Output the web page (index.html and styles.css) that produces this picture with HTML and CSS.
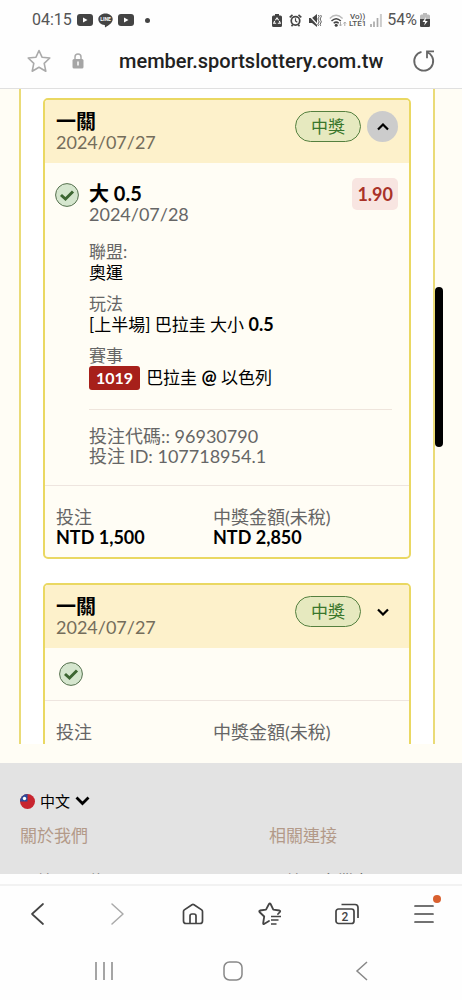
FILE: index.html
```html
<!DOCTYPE html>
<html lang="zh-Hant">
<head>
<meta charset="utf-8">
<meta name="viewport" content="width=device-width, initial-scale=1">
<title>member.sportslottery.com.tw</title>
<link rel="stylesheet" href="styles.css">
</head>
<body>
<div class="status-bar">
  <div class="status-group">
    <span class="clock">04:15</span>
    <svg width="16" height="12" viewBox="0 0 16 12"><rect width="16" height="12" rx="3" fill="#444"/><path d="M6 3.5v5L10.5 6z" fill="#fff"/></svg>
    <svg width="15" height="15" viewBox="0 0 15 15"><path d="M7.500 .5C3.500.5.3 3 .3 6.300c0 3 2.700 5.400 6.200 5.800.6.100.5.700.4 1.400-.1.900.5.700 1.100.4 2.200-1.200 6.700-4 6.700-7.600C14.700 3 11.500.5 7.500.5z" fill="#444"/><text x="7.500" y="8" text-anchor="middle" class="line-text">LINE</text></svg>
    <svg width="16" height="12" viewBox="0 0 16 12"><rect width="16" height="12" rx="3" fill="#444"/><path d="M6 3.500v5L10.500 6z" fill="#fff"/></svg>
    <span class="more-dot"></span>
  </div>
  <div class="status-group status-right">
    <svg width="10" height="13" viewBox="0 0 10 13"><path d="M3 0h4v1.500h1.500Q10 1.500 10 3v8.500q0 1.500-1.500 1.500h-7Q0 13 0 11.500V3q0-1.500 1.500-1.500H3z" fill="#444"/><path d="M3.400 6.200 5 4l1.600 2.200M7.300 7l1 2.200H5.800M2.700 7l-1 2.200h2.500" fill="none" stroke="#fff" stroke-width="1.100"/></svg>
    <svg width="13" height="13" viewBox="0 0 13 13"><path d="M.7 3.300 3.500.8M12.300 3.300 9.500.8M2.500 12.300l1.200-1.500M10.500 12.300l-1.200-1.500" stroke="#444" stroke-width="1.600"/><circle cx="6.500" cy="6.800" r="5.100" fill="#444"/><circle cx="6.500" cy="6.800" r="3.400" fill="#fff"/><path d="M6.500 4.300V7l1.800 1.200" stroke="#444" fill="none" stroke-width="1.200"/></svg>
    <svg width="13" height="13" viewBox="0 0 13 13"><path d="M0 4h3l5-4v13L3 9H0z" fill="#444"/><path d="M0 1.500l9.500 10" stroke="#fff" stroke-width="1.200"/><path d="M9.500 1q1.200 1.500 0 2.700t0 2.700 0 2.700 0 2.700M11.700 1q1.200 1.500 0 2.700t0 2.700 0 2.700 0 2.700" fill="none" stroke="#555"/></svg>
    <svg class="wifi" width="18" height="13" viewBox="0 0 18 13"><path d="M.8 4.500Q7 -2 13.600 4.500" stroke="#bbb" stroke-width="1.400" fill="none"/><path d="M2.500 7Q7.200 2.500 11.800 7M4.700 9.300q2.500-2.300 5 0" stroke="#444" stroke-width="1.500" fill="none"/><circle cx="7.200" cy="11.300" r="1.500" fill="#444"/><path d="M11.500 8v4m-1.300-1.500L11.500 12l1.300-1.500M15.800 12V8m-1.300 1.500L15.800 8l1.300 1.500" fill="none" stroke="#aaa"/></svg>
    <span class="volte"><span>Vo))</span><span>LTE1</span></span>
    <svg width="12" height="13" viewBox="0 0 12 13"><path d="M1 13v-3M4 13V7.500M7.500 13V4" stroke="#aaa" stroke-width="1.700"/><path d="M10.900 13V0" stroke="#ccc" stroke-width="2"/></svg>
    <span class="percent">54%</span>
    <svg width="10" height="14" viewBox="0 0 10 14"><path d="M3 0h4v1.500h1.500Q10 1.500 10 3v9.500Q10 14 8.500 14h-7Q0 14 0 12.500V3q0-1.500 1.500-1.500H3z" fill="#bbb"/><path d="M0 6h10v6.500Q10 14 8.500 14h-7Q0 14 0 12.500z" fill="#444"/><path d="M6 4 2.500 9H5l-.8 3.500L7.800 8H5.300z" fill="#fff"/></svg>
  </div>
</div>
<header class="address-bar">
  <button class="icon-button" aria-label="書籤"><svg width="26" height="26" viewBox="0 0 26 26"><path d="M13 2.500 16 9.200 23.800 10 18.200 15.300 19.800 23.200 13 19.200 6.200 23.200 7.800 15.300 2.200 10 10 9.200z" fill="none" stroke="#aaa" stroke-width="1.600" stroke-linejoin="round"/></svg></button>
  <svg class="lock" width="12" height="16" viewBox="0 0 12 16"><path d="M3 7V4q0-3 3-3t3 3v3" fill="none" stroke="#aaa" stroke-width="1.500"/><rect x=".5" y="6" width="11" height="9.500" rx="1.500" fill="#a5a5a5"/><path d="M6 8.500v4" stroke="#fff" stroke-width="1.500"/></svg>
  <span class="address">member.sportslottery.com.tw</span>
  <button class="icon-button reload" aria-label="重新整理"><svg width="24" height="24" viewBox="0 0 24 24"><path d="M9.500 2.900A9.500 9.500 0 1 0 20 7.500Q18.500 4.500 15 3.200" fill="none" stroke="#666" stroke-width="1.800"/><path d="M22 2.300h-7v7" fill="none" stroke="#666" stroke-width="1.800"/></svg></button>
</header>
<main class="viewport">
  <div class="results">
    <div class="panel">
      <article class="card">
        <div class="card-head">
          <div><h2>一關</h2><time>2024/07/27</time></div>
          <span class="pill">中獎</span>
          <button class="toggle open" aria-label="收合"><svg width="12" height="8" viewBox="0 0 12 8"><path d="M1 6.500 6 1.500l5 5" fill="none" stroke="#000" stroke-width="2.200"/></svg></button>
        </div>
        <div class="pick">
          <svg class="check" width="24" height="24" viewBox="0 0 24 24"><circle cx="12" cy="12" r="11.400" fill="#d5e6ce" stroke="#55704e"/><path d="M6 12 10.500 16 18 8.500" fill="none" stroke="#3d6632" stroke-width="3"/></svg>
          <div class="pick-main">
            <div class="pick-title">
              <div><h3>大 0.5</h3><time>2024/07/28</time></div>
              <span class="odds">1.90</span>
            </div>
            <dl class="facts">
              <div><dt>聯盟:</dt><dd>奧運</dd></div>
              <div><dt>玩法</dt><dd>[上半場] 巴拉圭 大小 <b>0.5</b></dd></div>
              <div><dt>賽事</dt><dd><span class="match-no">1019</span>巴拉圭 <b>@</b> 以色列</dd></div>
            </dl>
            <div class="codes"><p>投注代碼:: 96930790</p><p>投注 ID: 107718954.1</p></div>
          </div>
        </div>
        <dl class="totals">
          <div><dt>投注</dt><dd>NTD 1,500</dd></div>
          <div><dt>中獎金額(未稅)</dt><dd>NTD 2,850</dd></div>
        </dl>
      </article>
      <article class="card">
        <div class="card-head">
          <div><h2>一關</h2><time>2024/07/27</time></div>
          <span class="pill">中獎</span>
          <button class="toggle" aria-label="展開"><svg width="12" height="8" viewBox="0 0 12 8"><path d="M1 1.500 6 6.500l5-5" fill="none" stroke="#000" stroke-width="2.200"/></svg></button>
        </div>
        <div class="summary">
          <svg class="check" width="24" height="24" viewBox="0 0 24 24"><circle cx="12" cy="12" r="11.400" fill="#d5e6ce" stroke="#55704e"/><path d="M6 12 10.500 16 18 8.500" fill="none" stroke="#3d6632" stroke-width="3"/></svg>
        </div>
        <dl class="totals">
          <div><dt>投注</dt></div>
          <div><dt>中獎金額(未稅)</dt></div>
        </dl>
      </article>
    </div>
  </div>
  <footer class="site-footer">
    <button class="language">
      <svg width="15" height="15" viewBox="0 0 15 15"><circle cx="7.500" cy="7.500" r="7.500" fill="#c8252f"/><path d="M0 7.500A7.500 7.500 0 0 1 7.500 0v7.500z" fill="#2c4c9c"/><circle cx="4.500" cy="4.500" r="1.700" fill="#fff"/></svg>
      <span>中文</span>
      <svg width="15" height="10" viewBox="0 0 15 10"><path d="M1.500 1.500 7.500 7.500l6-6" fill="none" stroke="#000" stroke-width="2.800"/></svg>
    </button>
    <div class="footer-columns">
      <section><h4>關於我們</h4><a href="#">管理單位</a></section>
      <section><h4>相關連接</h4><a href="#">第三方業者</a></section>
    </div>
  </footer>
  <div class="scroll-thumb"></div>
</main>
<nav class="toolbar">
  <button aria-label="上一頁"><svg width="26" height="26" viewBox="0 0 26 26"><path d="M17 3 6 13l11 10" fill="none" stroke="#444" stroke-width="1.700" stroke-linecap="round" stroke-linejoin="round"/></svg></button>
  <button aria-label="下一頁"><svg width="26" height="26" viewBox="0 0 26 26"><path d="M9 3 20 13 9 23" fill="none" stroke="#aaa" stroke-width="1.500" stroke-linecap="round" stroke-linejoin="round"/></svg></button>
  <button aria-label="首頁"><svg width="26" height="26" viewBox="0 0 26 26"><path d="M3.500 10.500q0-1 .8-1.600L12 3.700q1-.7 2 0l7.700 5.200q.8.600.8 1.600V20q0 2.500-2.500 2.500H6Q3.500 22.500 3.500 20z M10 22V15q0-2 2-2h2q2 0 2 2v7" fill="none" stroke="#444" stroke-width="1.700"/></svg></button>
  <button aria-label="書籤清單"><svg width="26" height="26" viewBox="0 0 26 26"><path d="M12 20 7 23q-1 .2-.8-1l1-6.500L2.500 11q-.7-1 .5-1.500l6-.8L12 3q.8-1.200 1.600 0l2.700 5.700 6.200.8q1.200.4.4 1.500L21 13" fill="none" stroke="#444" stroke-width="1.800" stroke-linecap="round" stroke-linejoin="round"/><path d="M14 15.500h10M14 19h7.500M14 23h5.500" stroke="#444" stroke-width="1.700"/></svg></button>
  <button aria-label="分頁"><svg width="26" height="26" viewBox="0 0 26 26"><rect x="2" y="8" width="18" height="14.500" rx="2.500" fill="none" stroke="#444" stroke-width="1.700"/><path d="M7.500 3.500H21q3 0 3 3V17" fill="none" stroke="#444" stroke-width="1.700"/><text x="11" y="19.500" text-anchor="middle" class="tab-count">2</text></svg></button>
  <button class="menu" aria-label="選單"><svg width="26" height="26" viewBox="0 0 26 26"><path d="M4 5h18M4 13h18M4 21h18" stroke="#444" stroke-width="1.700" stroke-linecap="round"/></svg><span class="badge"></span></button>
</nav>
<nav class="system-nav">
  <button aria-label="最近使用"><svg width="20" height="20" viewBox="0 0 20 20"><path d="M2 1v18M10 1v18M18 1v18" stroke="#888" stroke-width="1.500"/></svg></button>
  <button aria-label="主畫面"><svg width="20" height="20" viewBox="0 0 20 20"><rect x="1" y="1" width="18" height="18" rx="5.500" fill="none" stroke="#888" stroke-width="1.500"/></svg></button>
  <button aria-label="返回"><svg width="20" height="20" viewBox="0 0 20 20"><path d="M15 1 5 10l10 9" fill="none" stroke="#888" stroke-width="1.500"/></svg></button>
</nav>
</body>
</html>
```
FILE: styles.css
```css
* { box-sizing: border-box; }

body {
  margin: 0;
  height: 100vh;
  display: flex;
  flex-direction: column;
  background: #fefefe;
  color: #000;
  font-family: Lato, "Noto Sans CJK TC", sans-serif;
  font-size: 17px;
  line-height: 20px;
}

h2, h3, h4, p, dl, dd { margin: 0; }
svg { display: block; flex: none; }

button {
  border: 0;
  padding: 0;
  margin: 0;
  background: none;
  font: inherit;
  color: inherit;
  display: flex;
  align-items: center;
  justify-content: center;
}

/* Phone status bar */
.status-bar {
  flex: none;
  height: 40px;
  padding: 0 32px;
  display: flex;
  align-items: center;
  justify-content: space-between;
  font-family: Roboto, sans-serif;
  font-size: 16px;
  color: #555;
}
.status-group { display: flex; align-items: center; gap: 5px; }
.status-right { gap: 7px; }
.line-text { font: bold 5px Roboto, sans-serif; fill: #fff; }
.more-dot { width: 5px; height: 5px; margin-left: 6px; border-radius: 50%; background: #444; }
.percent { margin-right: -4px; margin-left: -2px; }
.volte {
  display: flex;
  flex-direction: column;
  margin: 0 -3px 0 -5px;
  font-size: 8px;
  line-height: 7px;
  font-weight: 500;
  text-align: center;
}

/* Browser address bar */
.address-bar {
  flex: none;
  height: 49px;
  padding: 0 26px 6px;
  display: flex;
  align-items: center;
  border-bottom: 1px solid #e0e0e0;
}
.lock { margin-left: 20px; }
.address {
  margin-left: 35px;
  font: 500 20px/24px Roboto, sans-serif;
  color: #222;
}
.reload { margin-left: auto; }

/* Page area */
.viewport {
  position: relative;
  flex: 1;
  min-height: 0;
  display: flex;
  flex-direction: column;
  background: #fffdf5;
}
.results {
  flex: 1;
  min-height: 0;
  margin: 0 27px 19px 19px;
  overflow: hidden;
}
.panel {
  padding: 9px 22px;
  border: 2px solid #eadb77;
  border-width: 0 2px;
  background: #fff;
}
.card {
  margin-bottom: 24px;
  border: 2px solid #ead862;
  border-radius: 5px;
  background: #fffdf5;
  overflow: hidden;
}
.card-head {
  display: flex;
  align-items: flex-start;
  padding: 11px;
  min-height: 63px;
  background: #fdf1cb;
}
h2 { font-size: 20px; line-height: 21px; }
time { display: block; color: #666; font-size: 18px; }
.card-head time { color: #746d5b; }
.pill {
  margin-left: auto;
  width: 66px;
  border: 1px solid #55803f;
  border-radius: 16px;
  background: #e6e9bf;
  color: #39762b;
  line-height: 29px;
  text-align: center;
}
.toggle { width: 31px; height: 31px; margin-left: 6px; border-radius: 50%; }
.toggle.open { background: #ccc; }

.pick { display: flex; gap: 10px; padding: 20px 11px 19px 10px; }
.pick-main { flex: 1; }
.pick-title { display: flex; justify-content: space-between; padding-bottom: 17px; }
h3 { font-size: 20px; line-height: 21px; }
.odds {
  height: 32px;
  margin-top: -5px;
  padding: 0 5px;
  border-radius: 5px;
  background: #f8e5e1;
  color: #a93228;
  font-size: 18px;
  font-weight: 700;
  line-height: 32px;
}
.facts { display: flex; flex-direction: column; gap: 10px; margin-right: 6px; padding-bottom: 19px; border-bottom: 1px solid #efe5dc; }
.facts b { font-size: 18px; }
dt { color: #666; line-height: 21px; }
dd { line-height: 21px; }
.match-no {
  display: inline-block;
  margin-right: 6px;
  padding: 0 7px;
  border-radius: 3px;
  background: #a7201a;
  color: #fff;
  font-size: 16px;
  font-weight: 700;
  line-height: 24px;
}
.codes { padding-top: 16px; color: #666; font-size: 18px; }
.totals {
  display: grid;
  grid-template-columns: 157px 1fr;
  padding: 21px 11px 10px;
  border-top: 1px solid #eee5df;
  font-size: 18px;
}
.totals dt, .totals dd { line-height: 20px; }
.totals dd { font-weight: 700; }
.summary { padding: 14px; }

/* Site footer */
.site-footer {
  flex: none;
  height: 111px;
  padding: 28px 20px 0;
  overflow: hidden;
  background: #e3e3e3;
}
.language { gap: 5px; font-size: 15px; }
.footer-columns { display: grid; grid-template-columns: 249px 1fr; padding-top: 14px; }
h4 { font-weight: 400; color: #b39a89; line-height: 22px; }
.footer-columns a { display: block; padding: 25px 17px 0; color: #666; text-decoration: none; }
section + section a { padding-left: 0; }

.scroll-thumb {
  position: absolute;
  top: 198px;
  right: 19px;
  width: 8px;
  height: 160px;
  border-radius: 4px;
  background: #000;
}

/* Browser toolbar and system keys */
.toolbar {
  flex: none;
  height: 58px;
  margin-top: 10px;
  border-top: 2px solid #f2f2f2;
  display: grid;
  grid-template-columns: repeat(6, 1fr);
}
.menu { position: relative; }
.badge {
  position: absolute;
  top: 9px;
  right: 21px;
  width: 8px;
  height: 8px;
  border-radius: 50%;
  background: #d9602f;
}
.tab-count { font: 500 12px Roboto, sans-serif; fill: #444; }
.system-nav {
  flex: none;
  height: 58px;
  padding: 0 36px 0 39px;
  display: grid;
  grid-template-columns: repeat(3, 1fr);
}
```
